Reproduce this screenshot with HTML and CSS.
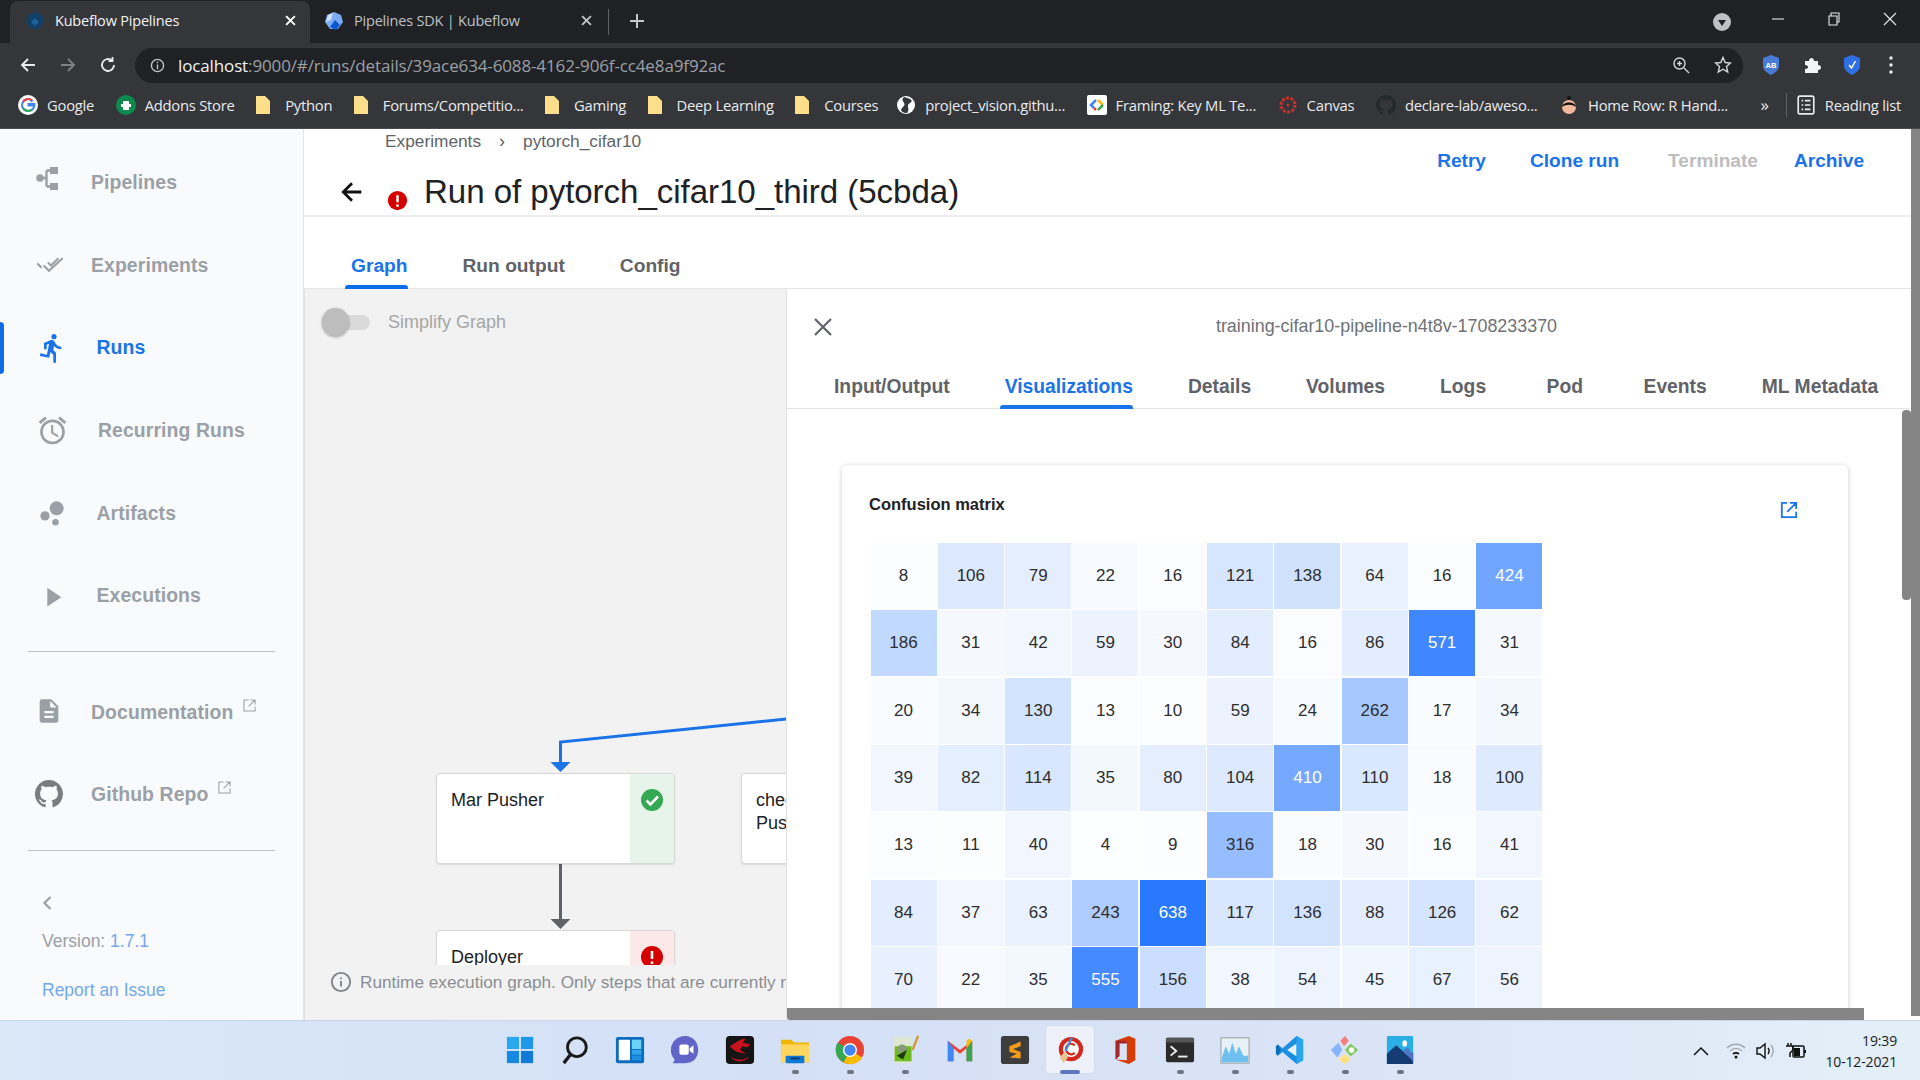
FILE: index.html
```html
<!DOCTYPE html>
<html lang="en">
<head>
<meta charset="utf-8">
<title>Kubeflow Pipelines</title>
<link rel="stylesheet" href="styles.css">
</head>
<body>
<div class="screen">
  <div class="tabstrip">
    <div class="tab active">
      <svg class="fav" viewBox="0 0 20 20"><path d="M10 1 17 4 19 11 14 18 6 18 1 11 3 4Z" fill="#123f66"/><path d="M10 7 14 11 10 15 6 11Z" fill="#1c5f99"/></svg>
      <span class="tab-title">Kubeflow Pipelines</span>
      <svg class="tab-x" viewBox="0 0 10 10"><path d="M1 1 9 9M9 1 1 9"/></svg>
    </div>
    <div class="tab second">
      <svg class="fav" viewBox="0 0 20 20"><path d="M10 1 17 4 19 11 14 18 6 18 1 11 3 4Z" fill="#7baaf7"/><path d="M4 4 9 2 7 9 2 11Z" fill="#cfe0fb"/><path d="M11 9 16 14 12 19 6 16Z" fill="#0b57d0"/></svg>
      <span class="tab-title">Pipelines SDK | Kubeflow</span>
      <svg class="tab-x dim" viewBox="0 0 10 10"><path d="M1 1 9 9M9 1 1 9"/></svg>
    </div>
    <div class="tab-sep"></div>
    <svg class="newtab" viewBox="0 0 16 16"><path d="M8 1V15M1 8H15"/></svg>
    <div class="spacer"></div>
    <svg class="profile" viewBox="0 0 18 18"><circle cx="9" cy="9" r="9" fill="#bdc1c6"/><path d="M5 7H13L9 13Z" fill="#202124"/></svg>
    <svg class="win min" viewBox="0 0 14 14"><path d="M1 7H13"/></svg>
    <svg class="win max" viewBox="0 0 14 14"><path d="M2 4H10V13H2ZM4 4V1H12V10H10"/></svg>
    <svg class="win cls" viewBox="0 0 14 14"><path d="M1 1 13 13M13 1 1 13"/></svg>
  </div>

  <div class="toolbar">
    <svg class="nav" viewBox="0 0 18 18"><path d="M16 9H3M9 3 3 9 9 15"/></svg>
    <svg class="nav off" viewBox="0 0 18 18"><path d="M2 9H15M9 3 15 9 9 15"/></svg>
    <svg class="nav reload" viewBox="0 0 18 18"><path d="M15 9A6 6 0 1 1 13 4.500M13.500 1V5H9.500"/></svg>
    <div class="omnibox">
      <svg class="info" viewBox="0 0 16 16"><circle cx="8" cy="8" r="6.500"/><path d="M8 7V12M8 4V5.500"/></svg>
      <span class="url"><b>localhost</b>:9000/#/runs/details/39ace634-6088-4162-906f-cc4e8a9f92ac</span>
      <svg class="omni-ic zoomic" viewBox="0 0 18 18"><circle cx="7.500" cy="7.500" r="5.500"/><path d="M12 12 17 17M5 7.500H10M7.500 5V10"/></svg>
      <svg class="omni-ic" viewBox="0 0 18 18"><path d="M9 1.500 11.200 6.500 16.500 7 12.500 10.600 13.700 16 9 13.200 4.300 16 5.500 10.600 1.500 7 6.800 6.500Z"/></svg>
    </div>
    <div class="ext-icons">
      <svg class="ext" viewBox="0 0 18 20"><path d="M1 3 9 0 17 3V11C17 15 13 18 9 20 5 18 1 15 1 11Z" fill="#4a7bd4"/><text x="9" y="12.500" class="ab">AB</text></svg>
      <svg class="ext" viewBox="0 0 18 18"><path d="M2 5H6C6 1 11 1 11 5H15V9C19 9 19 14 15 14V17H2V13C6 13 6 9 2 9Z" fill="#f1f3f4"/></svg>
      <svg class="ext" viewBox="0 0 18 20"><path d="M1 3 9 0 17 3V11C17 15 13 18 9 20 5 18 1 15 1 11Z" fill="#2f6fe4"/><path d="M6 10 8.500 13 12.500 6" fill="none" stroke="#fff" stroke-width="1.500"/></svg>
      <svg class="ext dots" viewBox="0 0 4 18"><circle cx="2" cy="2" r="1.700"/><circle cx="2" cy="9" r="1.700"/><circle cx="2" cy="16" r="1.700"/></svg>
    </div>
  </div>

  <div class="bookmarks">
    <span class="bm"><svg class="bi" viewBox="0 0 20 20"><circle cx="10" cy="10" r="10" fill="#fff"/><path d="M15.500 10.500H10.500V9H16.500C16.800 13 14 16 10 16A6 6 0 1 1 14 5.500L12.800 6.800" fill="none" stroke="#4285f4" stroke-width="2"/><path d="M5 7A6 6 0 0 1 14 5.500" fill="none" stroke="#ea4335" stroke-width="2"/><path d="M5 13A6 6 0 0 0 14 14.500" fill="none" stroke="#34a853" stroke-width="2"/></svg>Google</span>
    <span class="bm"><svg class="bi" viewBox="0 0 20 20"><circle cx="10" cy="10" r="10" fill="#0f8a4f"/><path d="M7 6H13V9H15V12H13V15H7V12H5V9H7Z" fill="#fff"/></svg>Addons Store</span>
    <span class="bm"><svg class="fold" viewBox="0 0 14 18"><path d="M0 0H9L14 5V18H0Z"/></svg>Python</span>
    <span class="bm"><svg class="fold" viewBox="0 0 14 18"><path d="M0 0H9L14 5V18H0Z"/></svg>Forums/Competitio...</span>
    <span class="bm"><svg class="fold" viewBox="0 0 14 18"><path d="M0 0H9L14 5V18H0Z"/></svg>Gaming</span>
    <span class="bm"><svg class="fold" viewBox="0 0 14 18"><path d="M0 0H9L14 5V18H0Z"/></svg>Deep Learning</span>
    <span class="bm tight"><svg class="fold" viewBox="0 0 14 18"><path d="M0 0H9L14 5V18H0Z"/></svg>Courses</span>
    <span class="bm"><svg class="bi" viewBox="0 0 20 20"><circle cx="10" cy="10" r="9" fill="#fff"/><path d="M8 2C3 6 12 8 7 12S8 18 11 18C15 13 9 11 14 8S12 3 8 2Z" fill="#35363a"/></svg>project_vision.githu...</span>
    <span class="bm"><svg class="bi" viewBox="0 0 20 20"><rect width="20" height="20" rx="2" fill="#fff"/><path d="M9 5 4 10 7 13" fill="none" stroke="#4285f4" stroke-width="2.500"/><path d="M11 5 16 10" fill="none" stroke="#fbbc04" stroke-width="2.500"/><path d="M16 10 11 15" fill="none" stroke="#34a853" stroke-width="2.500"/><path d="M7 13 9 15" fill="none" stroke="#ea4335" stroke-width="2.500"/></svg>Framing: Key ML Te...</span>
    <span class="bm"><svg class="bi" viewBox="0 0 20 20"><circle cx="10" cy="10" r="7" fill="none" stroke="#c8322a" stroke-width="3" stroke-dasharray="3 1.400"/><circle cx="10" cy="10" r="1.500" fill="#c8322a"/></svg>Canvas</span>
    <span class="bm"><svg class="bi" viewBox="0 0 16 16"><path class="gh-dark" d="M8 0C3.580 0 0 3.580 0 8c0 3.540 2.290 6.530 5.470 7.590.4.070.55-.170.550-.380 0-.190-.010-.820-.010-1.490-2.010.370-2.530-.490-2.690-.940-.090-.230-.480-.940-.820-1.130-.280-.150-.680-.520-.010-.530.630-.010 1.080.580 1.230.820.720 1.210 1.870.870 2.330.660.070-.520.280-.870.510-1.070-1.780-.200-3.640-.890-3.640-3.950 0-.870.310-1.590.820-2.150-.080-.200-.360-1.020.080-2.120 0 0 .670-.210 2.200.820.640-.180 1.320-.270 2-.270s1.360.090 2 .270c1.530-1.040 2.200-.820 2.200-.820.440 1.100.160 1.920.080 2.120.510.560.820 1.270.820 2.150 0 3.070-1.870 3.750-3.650 3.950.290.250.540.730.540 1.480 0 1.070-.010 1.930-.010 2.200 0 .210.150.460.550.380A8.010 8.010 0 0 0 16 8c0-4.420-3.580-8-8-8Z"/></svg>declare-lab/aweso...</span>
    <span class="bm"><svg class="bi" viewBox="0 0 20 20"><circle cx="10" cy="12" r="7" fill="#f2b89b"/><path d="M3 12C3 6 17 6 17 12 13 9 7 9 3 12ZM8 3A2 2 0 1 1 12 3 2 2 0 1 1 8 3Z" fill="#111"/></svg>Home Row: R Hand...</span>
    <span class="spacer"></span>
    <span class="more">»</span>
    <span class="bm-sep"></span>
    <span class="bm last"><svg class="bi" viewBox="0 0 16 18"><rect x="1" y="1" width="14" height="16" rx="1.500" fill="none" stroke="#e8eaed" stroke-width="1.500"/><path d="M4 5H5.500M7 5H12M4 9H5.500M7 9H12M4 13H5.500M7 13H12" stroke="#e8eaed" stroke-width="1.500"/></svg>Reading list</span>
  </div>

  <div class="app">
    <aside class="sidebar">
      <nav class="nav-main">
        <a class="nav-item"><svg class="nav-ic ic-pipe" viewBox="0 0 22 23"><circle cx="4" cy="11" r="3.800"/><rect x="14" y="0" width="8" height="7"/><rect x="14" y="16" width="8" height="7"/><path class="pipe-line" d="M4 11H10.500M10.500 3.500V19.500M10.500 3.500H15M10.500 19.500H15"/></svg><span>Pipelines</span></a>
        <a class="nav-item"><svg class="nav-ic ic-exp" viewBox="0 0 26 18"><path class="tick" d="M1 8 5 12M7 10 12 15 25 3M11 7 14 10 21 3"/></svg><span>Experiments</span></a>
        <a class="nav-item current shift"><svg class="nav-ic ic-run" viewBox="0 0 24 24"><path d="M13.490 5.480c1.100 0 2-.900 2-2s-.900-2-2-2-2 .900-2 2 .900 2 2 2zm-3.600 13.900 1-4.400 2.100 2v6h2v-7.500l-2.100-2 .600-3c1.300 1.500 3.300 2.500 5.500 2.500v-2c-1.900 0-3.500-1-4.300-2.400l-1-1.600c-.400-.600-1-1-1.700-1-.300 0-.500.100-.800.100l-5.200 2.200v4.700h2v-3.400l1.800-.700-1.600 8.100-4.900-1-.400 2 7 1.400z"/></svg><span>Runs</span></a>
        <a class="nav-item shift"><svg class="nav-ic ic-alarm" viewBox="0 0 24 24"><path d="M22 5.720l-4.600-3.860-1.290 1.530 4.600 3.860L22 5.720zM7.880 3.390 6.600 1.860 2 5.710l1.290 1.530 4.590-3.850zM12.500 8H11v6l4.750 2.850.750-1.230-4-2.370V8zM12 4c-4.970 0-9 4.030-9 9s4.030 9 9 9 9-4.030 9-9-4.030-9-9-9zm0 16c-3.870 0-7-3.130-7-7s3.130-7 7-7 7 3.130 7 7-3.130 7-7 7z"/></svg><span>Recurring Runs</span></a>
        <a class="nav-item shift"><svg class="nav-ic" viewBox="0 0 24 24"><circle cx="16" cy="8" r="6"/><circle cx="6" cy="14.500" r="4"/><circle cx="15" cy="20" r="2.800"/></svg><span>Artifacts</span></a>
        <a class="nav-item shift"><svg class="nav-ic" viewBox="0 0 24 24"><path d="M8 5 20 13 8 21Z"/></svg><span>Executions</span></a>
      </nav>
      <div class="rule"></div>
      <nav class="nav-ext">
        <a class="nav-item"><svg class="nav-ic ic-doc" viewBox="0 0 24 24"><path d="M14 2H6C4.900 2 4 2.900 4 4V20C4 21.100 4.900 22 6 22H18C19.100 22 20 21.100 20 20V8ZM16 18H8V16H16ZM16 14H8V12H16ZM13 9V3.500L18.500 9Z"/></svg><span>Documentation</span><svg class="ext-link" viewBox="0 0 14 14"><path d="M6 1H1V13H13V8M8 1H13V6M13 1 6 8"/></svg></a>
        <a class="nav-item"><svg class="nav-ic gh" viewBox="0 0 16 16"><path d="M8 0C3.580 0 0 3.580 0 8c0 3.540 2.290 6.530 5.470 7.590.4.070.55-.170.550-.380 0-.190-.010-.820-.010-1.490-2.010.370-2.530-.490-2.690-.940-.090-.230-.480-.940-.820-1.130-.280-.150-.680-.520-.010-.530.630-.010 1.080.580 1.230.820.720 1.210 1.870.870 2.330.660.070-.520.280-.870.510-1.070-1.780-.200-3.640-.890-3.640-3.950 0-.870.310-1.590.820-2.150-.080-.200-.360-1.020.080-2.120 0 0 .670-.210 2.200.820.640-.180 1.320-.270 2-.270s1.360.090 2 .270c1.530-1.040 2.200-.820 2.200-.820.440 1.100.160 1.920.080 2.120.510.560.820 1.270.820 2.150 0 3.070-1.870 3.750-3.650 3.950.290.250.540.730.540 1.480 0 1.070-.010 1.930-.010 2.200 0 .210.150.460.550.380A8.010 8.010 0 0 0 16 8c0-4.420-3.580-8-8-8Z"/></svg><span>Github Repo</span><svg class="ext-link" viewBox="0 0 14 14"><path d="M6 1H1V13H13V8M8 1H13V6M13 1 6 8"/></svg></a>
      </nav>
      <div class="rule second-rule"></div>
      <svg class="collapse" viewBox="0 0 10 16"><path d="M8.500 2 2.500 8 8.500 14"/></svg>
      <div class="version">Version: <a>1.7.1</a></div>
      <a class="report">Report an Issue</a>
    </aside>

    <main class="content">
      <header class="page-head">
        <div class="head-left">
          <div class="crumbs"><span>Experiments</span><span class="crumb-sep">›</span><span>pytorch_cifar10</span></div>
          <div class="title-row">
            <svg class="back" viewBox="0 0 24 24"><path d="M20 12H5M12 4.500 4.500 12 12 19.500"/></svg>
            <svg class="err" viewBox="0 0 24 24"><circle cx="12" cy="12" r="11"/><path d="M12 6V14M12 16.500V19"/></svg>
            <h1>Run of pytorch_cifar10_third (5cbda)</h1>
          </div>
        </div>
        <div class="actions"><a>Retry</a><a>Clone run</a><a class="off">Terminate</a><a>Archive</a></div>
      </header>
      <div class="page-tabs"><a class="sel">Graph</a><a>Run output</a><a>Config</a></div>
      <div class="work">
        <section class="graph">
          <div class="switch-row"><span class="switch"><i></i></span><span>Simplify Graph</span></div>
          <svg class="edges" viewBox="0 0 482 725"><path class="e-blue" d="M482 430 255.500 453V476"/><path class="f-blue" d="M245.500 473H265.500L255.500 483Z"/><path class="e-gray" d="M255.500 575V632"/><path class="f-gray" d="M245.500 630H265.500L255.500 640Z"/></svg>
          <div class="node n-mar"><span class="node-name">Mar Pusher</span><span class="node-status ok"><svg viewBox="0 0 24 24"><circle cx="12" cy="12" r="11" fill="#34a853"/><path d="M6.500 12.500 10.500 16.500 18 8.500" fill="none" stroke="#fff" stroke-width="2.600"/></svg></span></div>
          <div class="node n-che"><span class="node-name">checkpoint<br>Pusher</span></div>
          <div class="node n-dep"><span class="node-name">Deployer</span><span class="node-status bad"><svg viewBox="0 0 24 24"><circle cx="12" cy="12" r="11" fill="#d50000"/><path d="M12 6V14M12 16.500V19" fill="none" stroke="#fff" stroke-width="2.600"/></svg></span></div>
          <div class="graph-note"><svg viewBox="0 0 24 24"><circle cx="12" cy="12" r="10"/><path d="M12 11V17M12 7V9"/></svg><span>Runtime execution graph. Only steps that are currently running or have already completed are shown.</span></div>
        </section>
        <section class="panel">
          <div class="panel-top">
            <svg class="close" viewBox="0 0 20 20"><path d="M2 2 18 18M18 2 2 18"/></svg>
            <div class="panel-title">training-cifar10-pipeline-n4t8v-1708233370</div>
          </div>
          <div class="panel-tabs"><a>Input/Output</a><a class="sel">Visualizations</a><a>Details</a><a>Volumes</a><a>Logs</a><a class="wide">Pod</a><a class="wide">Events</a><a>ML Metadata</a></div>
          <div class="panel-body">
            <div class="card">
              <div class="card-head"><h2>Confusion matrix</h2><svg class="popout" viewBox="0 0 20 20"><path d="M8 2H2V18H18V12M11 2H18V9M18 2 8 12"/></svg></div>
              <div class="matrix">
                <div class="c" style="--v:.0125">8</div><div class="c" style="--v:.166">106</div><div class="c" style="--v:.124">79</div><div class="c" style="--v:.034">22</div><div class="c" style="--v:.025">16</div><div class="c" style="--v:.19">121</div><div class="c" style="--v:.216">138</div><div class="c" style="--v:.1">64</div><div class="c" style="--v:.025">16</div><div class="c w" style="--v:.665">424</div>
                <div class="c" style="--v:.292">186</div><div class="c" style="--v:.049">31</div><div class="c" style="--v:.066">42</div><div class="c" style="--v:.092">59</div><div class="c" style="--v:.047">30</div><div class="c" style="--v:.132">84</div><div class="c" style="--v:.025">16</div><div class="c" style="--v:.135">86</div><div class="c w" style="--v:.895">571</div><div class="c" style="--v:.049">31</div>
                <div class="c" style="--v:.031">20</div><div class="c" style="--v:.053">34</div><div class="c" style="--v:.204">130</div><div class="c" style="--v:.02">13</div><div class="c" style="--v:.016">10</div><div class="c" style="--v:.092">59</div><div class="c" style="--v:.038">24</div><div class="c" style="--v:.411">262</div><div class="c" style="--v:.027">17</div><div class="c" style="--v:.053">34</div>
                <div class="c" style="--v:.061">39</div><div class="c" style="--v:.129">82</div><div class="c" style="--v:.179">114</div><div class="c" style="--v:.055">35</div><div class="c" style="--v:.125">80</div><div class="c" style="--v:.163">104</div><div class="c w" style="--v:.643">410</div><div class="c" style="--v:.172">110</div><div class="c" style="--v:.028">18</div><div class="c" style="--v:.157">100</div>
                <div class="c" style="--v:.02">13</div><div class="c" style="--v:.017">11</div><div class="c" style="--v:.063">40</div><div class="c" style="--v:.006">4</div><div class="c" style="--v:.014">9</div><div class="c" style="--v:.495">316</div><div class="c" style="--v:.028">18</div><div class="c" style="--v:.047">30</div><div class="c" style="--v:.025">16</div><div class="c" style="--v:.064">41</div>
                <div class="c" style="--v:.132">84</div><div class="c" style="--v:.058">37</div><div class="c" style="--v:.099">63</div><div class="c" style="--v:.381">243</div><div class="c w" style="--v:1">638</div><div class="c" style="--v:.183">117</div><div class="c" style="--v:.213">136</div><div class="c" style="--v:.138">88</div><div class="c" style="--v:.197">126</div><div class="c" style="--v:.097">62</div>
                <div class="c" style="--v:.11">70</div><div class="c" style="--v:.034">22</div><div class="c" style="--v:.055">35</div><div class="c w" style="--v:.87">555</div><div class="c" style="--v:.245">156</div><div class="c" style="--v:.06">38</div><div class="c" style="--v:.085">54</div><div class="c" style="--v:.071">45</div><div class="c" style="--v:.105">67</div><div class="c" style="--v:.088">56</div>
              </div>
            </div>
          </div>
          <div class="thumb-v"></div>
          <div class="thumb-h"></div>
        </section>
      </div>
    </main>
    <div class="page-scroll"></div>
  </div>

  <footer class="taskbar">
    <div class="task-icons">
      <span class="ti"><svg viewBox="0 0 32 32"><path fill="#29a8ee" d="M2 2H15V15H2Z"/><path fill="#1e97e8" d="M17 2H30V15H17Z"/><path fill="#1689e0" d="M2 17H15V30H2Z"/><path fill="#0f7bd6" d="M17 17H30V30H17Z"/></svg></span>
      <span class="ti"><svg viewBox="0 0 32 32"><circle cx="18" cy="13" r="10" fill="none" stroke="#1a1a1a" stroke-width="3"/><path d="M11 21 4 30" stroke="#1a1a1a" stroke-width="3.500"/></svg></span>
      <span class="ti"><svg viewBox="0 0 32 32"><rect x="1" y="2" width="30" height="28" rx="2" fill="#0f6cbd"/><rect x="4" y="5" width="12" height="22" rx="1" fill="#fff"/><rect x="18" y="5" width="10" height="10" fill="#69d2f7"/><rect x="18" y="16" width="10" height="5" fill="#2fa6ee"/><rect x="18" y="22" width="10" height="5" fill="#1c8fe6"/></svg></span>
      <span class="ti"><svg viewBox="0 0 32 32"><path d="M16 1C25 1 30 8 30 16S25 30 16 30H3L5 26C2 23 1 20 1 16 1 8 7 1 16 1Z" fill="#6264c7"/><rect x="10" y="10" width="10" height="11" rx="2" fill="#fff"/><path d="M21 14 25 11V20L21 17Z" fill="#fff"/></svg></span>
      <span class="ti"><svg viewBox="0 0 32 32"><rect x="1" y="1" width="30" height="30" rx="4" fill="#151515"/><path d="M5 12C11 9 15 4 22 4L19 8 27 10 24 13 18 12 16 16 23 20 13 18C9 16 7 14 5 12ZM6 23C13 28 20 27 26 23 20 30 11 30 6 23Z" fill="#c8121d"/></svg></span>
      <span class="ti dot"><svg viewBox="0 0 32 32"><path d="M1 5H12L15 8H31V29H1Z" fill="#f2b705"/><path d="M1 10H31V29H1Z" fill="#ffd75e"/><rect x="6" y="22" width="20" height="8" rx="1" fill="#0f78d4"/><rect x="11" y="24" width="10" height="2" fill="#0b3d70"/></svg></span>
      <span class="ti dot"><svg viewBox="0 0 32 32"><circle cx="16" cy="16" r="15" fill="#ea4335"/><path d="M16 16 29 24A15 15 0 0 1 9 29.300Z" fill="#fbbc04"/><path d="M16 16 9 29.300A15 15 0 0 1 3 8Z" fill="#34a853"/><circle cx="16" cy="16" r="7.500" fill="#fff"/><circle cx="16" cy="16" r="6" fill="#4285f4"/></svg></span>
      <span class="ti dot"><svg viewBox="0 0 32 32"><path d="M4 2H23V30H6L4 28Z" fill="#dfe6d2"/><rect x="5" y="12" width="18" height="16" fill="#6bbd1e"/><circle cx="13" cy="15" r="5" fill="#8a9a78"/><path d="M7 22 18 16 14 26Z" fill="#1d3b10"/><path d="M24 16 30 1" stroke="#d39a2e" stroke-width="2.500"/></svg></span>
      <span class="ti"><svg viewBox="0 0 32 32"><path d="M3 6 16 16 29 6V28H23V14L16 20 9 14V28H3Z" fill="#ea4335"/><path d="M3 6V28H9V14L3 6Z" fill="#4285f4"/><path d="M29 6V28H23V14L29 6Z" fill="#34a853"/><path d="M23 14 29 6 26 4 23 6Z" fill="#fbbc04"/></svg></span>
      <span class="ti"><svg viewBox="0 0 32 32"><rect x="1" y="1" width="30" height="30" rx="3" fill="#3d3d3d"/><path d="M22 7 10 12V18L18 20 10 24 22 25V18L14 15 22 12Z" fill="#f49b1a"/></svg></span>
      <span class="ti running"><svg viewBox="0 0 32 32"><circle cx="17" cy="15" r="13" fill="#d3281f"/><circle cx="17" cy="15" r="8.500" fill="#fff"/><path d="M21 11A5.500 5.500 0 1 0 21 19" fill="none" stroke="#d3281f" stroke-width="2.500"/><path d="M18 3 11 17" stroke="#3f8fd6" stroke-width="2.500"/><path d="M5 24 11 17 14 24 9 30Z" fill="#e9c48e"/></svg></span>
      <span class="ti"><svg viewBox="0 0 32 32"><path d="M6 6 20 1 27 4V27L20 31 6 26 18 27V6L10 9V22L6 26Z" fill="#d83b01"/><path d="M6 6 18 6V9L10 9V22L6 26Z" fill="#a4262c"/></svg></span>
      <span class="ti dot"><svg viewBox="0 0 32 32"><rect x="1" y="3" width="30" height="26" rx="2" fill="#2b2b2b"/><rect x="1" y="3" width="30" height="5" fill="#555"/><path d="M6 12 12 17 6 22" fill="none" stroke="#eee" stroke-width="2"/><path d="M14 23H24" stroke="#eee" stroke-width="2"/></svg></span>
      <span class="ti dot"><svg viewBox="0 0 32 32"><rect x="1" y="3" width="30" height="27" fill="#e8f1f8" stroke="#999"/><path d="M2 24 6 12 10 20 13 8 17 20 20 12 25 22 30 22V29H2Z" fill="#6fc0ee"/></svg></span>
      <span class="ti dot"><svg viewBox="0 0 32 32"><path d="M23 1 30 5V27L23 31 8 18 3 22 1 20V12L3 10 8 14Z" fill="#1d8fe0"/><path d="M23 9V23L13 16Z" fill="#e8eff8"/><path d="M23 1 30 5V27L23 31Z" fill="#2aa6f0"/><path d="M3 10 1 12V20L3 22 6 16Z" fill="#0b6fb8"/></svg></span>
      <span class="ti dot"><svg viewBox="0 0 32 32"><path d="M9 8 1 16 8 24 13 16Z" fill="#86b4ff"/><path d="M16 1 11 6 15 12 20 6Z" fill="#f47f7f"/><path d="M22 9 16 16 22 23 30 16Z" fill="#7cc95a"/><circle cx="23" cy="16" r="3" fill="#fff"/><path d="M16 20 9 26 16 31 22 26Z" fill="#ffe082"/></svg></span>
      <span class="ti dot"><svg viewBox="0 0 32 32"><rect x="2" y="1" width="28" height="30" rx="1" fill="#29aee6"/><path d="M2 31V20L12 11 23 21 30 19V31Z" fill="#143c73"/><path d="M19 17 24 13 30 21V28Z" fill="#4e76c2"/><ellipse cx="21" cy="9" rx="2.500" ry="3.500" fill="#fff"/></svg></span>
    </div>
    <div class="tray">
      <svg class="caret" viewBox="0 0 16 10"><path d="M1 9 8 2 15 9"/></svg>
      <svg class="tr-ic" viewBox="0 0 20 18"><path class="wifi-off" d="M1 6C6 1 14 1 19 6M4 9C8 5.500 12 5.500 16 9"/><path class="wifi-on" d="M7 12C9 10.500 11 10.500 13 12"/><circle cx="10" cy="15" r="1.500" fill="#111"/></svg>
      <svg class="tr-ic" viewBox="0 0 20 18"><path class="spk" d="M1 6H4L9 2V16L4 12H1Z"/><path class="spk" d="M12 6C13.500 8 13.500 10 12 12"/><path class="wifi-off" d="M15 3C18 7 18 11 15 15"/></svg>
      <svg class="tr-ic" viewBox="0 0 22 18"><path d="M3 1V4M6 1V4M1 4H8V8L5 11V15" fill="none" stroke="#111" stroke-width="1.500"/><rect x="8" y="4" width="11" height="11" rx="1" fill="none" stroke="#111" stroke-width="1.500"/><rect x="9" y="6" width="6" height="8" fill="#111"/><rect x="19" y="8" width="2" height="3" fill="#111"/></svg>
      <div class="clock"><span>19:39</span><span>10-12-2021</span></div>
    </div>
  </footer>
</div>
</body>
</html>
```

FILE: styles.css
```css
* { box-sizing: border-box; }
html, body { margin: 0; height: 100%; overflow: hidden; }
body { font-family: "Liberation Sans", Arial, sans-serif; }
a { color: inherit; text-decoration: none; }
svg { display: block; flex: none; }
.spacer { flex: 1; }
.screen { width: 1920px; height: 1080px; display: flex; flex-direction: column; overflow: hidden; }

/* Browser chrome */
.tabstrip { height: 43px; background: #202124; display: flex; align-items: flex-end; padding-left: 10px; flex: none; }
.tab { height: 42px; width: 300px; display: flex; align-items: center; padding: 0 14px 3px 15px; color: #e8eaed; border-radius: 8px 8px 0 0; }
.tab.active { background: #35363a; color: #f1f3f4; }
.tab.second { width: 296px; padding-left: 14px; color: #bdc1c6; }
.fav { width: 20px; height: 20px; margin-right: 10px; }
.tab-title { flex: 1; font-family: "Open Sans", sans-serif; font-size: 14.500px; letter-spacing: -.2px; white-space: nowrap; overflow: hidden; }
.tab-x { width: 11px; height: 11px; fill: none; stroke: #fff; stroke-width: 1.800; }
.tab-x.dim { stroke: #bdc1c6; }
.tab-sep { width: 1px; height: 26px; background: #5f6368; margin: 0 0 8px 2px; }
.newtab { width: 16px; height: 16px; margin: 0 0 14px 20px; fill: none; stroke: #c4c7ca; stroke-width: 2; }
.profile { width: 18px; height: 18px; margin: 0 0 12px; }
.win { width: 14px; height: 14px; margin: 0 0 17px 42px; fill: none; stroke: #e8eaed; stroke-width: 1.100; }
.win.min { margin-left: 40px; }
.win.cls { margin: 0 23px 17px 42px; }

.toolbar { height: 44px; background: #35363a; display: flex; align-items: center; padding: 0 0 0 19px; flex: none; }
.nav { width: 18px; height: 18px; margin-right: 22px; fill: none; stroke: #e8eaed; stroke-width: 1.900; }
.nav.off { stroke: #7d8084; }
.nav.reload { margin-right: 18px; }
.omnibox { width: 1608px; height: 35px; background: #202124; border-radius: 18px; display: flex; align-items: center; padding: 0 11px 0 15px; }
.info { width: 15px; height: 15px; fill: none; stroke: #bdc1c6; stroke-width: 1.500; margin-right: 13px; }
.url { flex: 1; color: #9aa0a6; font-family: "Open Sans", sans-serif; font-size: 17px; letter-spacing: -.13px; white-space: nowrap; }
.url b { font-weight: 400; color: #f1f3f4; }
.omni-ic { width: 18px; height: 18px; fill: none; stroke: #d5d7da; stroke-width: 1.400; }
.zoomic { margin-right: 24px; }
.ext-icons { display: flex; align-items: center; gap: 22.500px; margin-left: 19px; }
.ext { width: 18px; height: 20px; }
.ab { fill: #fff; font-size: 7.500px; font-weight: 700; text-anchor: middle; }
.dots { width: 4px; height: 18px; fill: #e8eaed; margin-left: 5.500px; }

.bookmarks { height: 42px; background: #35363a; display: flex; align-items: center; padding: 0 19px 6px 18px; border-bottom: 1px solid #4a4b4f; flex: none; color: #e8eaed; font-family: "Open Sans", sans-serif; font-size: 14.800px; letter-spacing: -.25px; white-space: nowrap; }
.bm { display: flex; align-items: center; margin-right: 21.500px; }
.bm.tight { margin-right: 18px; }
.bm.last { margin: 0; }
.bi { width: 20px; height: 20px; margin-right: 9px; }
.fold { width: 14px; height: 18px; margin-right: 15px; fill: #fdde8a; }
.gh-dark { fill: #24292e; }
.more { color: #e8eaed; font-size: 17px; margin-right: 17px; }
.bm-sep { width: 1px; height: 24px; background: #5f6368; margin-right: 9px; }

/* KFP app */
.app { flex: 1; min-height: 0; display: flex; position: relative; background: #fff; }
.sidebar { width: 304px; flex: none; background: #f8fafb; border-right: 1px solid #e4e5e7; padding-top: 12.500px; display: flex; flex-direction: column; color: #9aa0a6; }
.nav-main { display: flex; flex-direction: column; }
.nav-item { height: 82.600px; display: flex; align-items: center; padding-left: 34px; font-size: 19.400px; font-weight: 700; letter-spacing: .1px; color: #9aa0a6; position: relative; }
.nav-ic { width: 28px; height: 28px; fill: #9aa0a6; margin-right: 29px; }
.ic-pipe { width: 22px; height: 23px; margin: -9px 33px 0 2px; }
.pipe-line { fill: none; stroke: #9aa0a6; stroke-width: 2.400; }
.ic-exp { width: 28px; height: 19px; margin: -2px 27px 0 2px; }
.nav-item.shift { padding-left: 38px; }
.nav-item.shift .nav-ic { margin-right: 30.500px; }
.nav-item.shift .ic-run { width: 32px; height: 32px; margin: 0 28.500px 0 -2px; }
.nav-item.shift .ic-alarm { width: 33px; height: 33px; margin: 0 29px 0 -2px; }
.tick { fill: none; stroke: #9aa0a6; stroke-width: 2; }
.nav-item.current { color: #1a73e8; }
.nav-item.current .nav-ic { fill: #1a73e8; }
.nav-item.current::before { content: ""; position: absolute; left: 0; top: 15px; width: 4px; height: 52px; background: #0d6de8; border-radius: 0 4px 4px 0; }
.rule { height: 1px; background: #bdc1c6; margin: 13.500px 28px 0 28px; flex: none; }
.nav-ext { margin-top: 20px; display: flex; flex-direction: column; }
.nav-ext .nav-item { height: 82px; }
.nav-ext .nav-ic { margin: -2px 28px 0 1px; }
.nav-ext .ic-doc { margin-top: -4px; }
.gh { fill: #7a7c80; }
.ext-link { width: 13px; height: 13px; margin: -14px 0 0 10px; fill: none; stroke: #9aa0a6; stroke-width: 1.100; }
.second-rule { margin-top: 14px; }
.collapse { width: 10px; height: 16px; margin: 44px 0 0 42px; fill: none; stroke: #9aa0a6; stroke-width: 2.200; }
.version { margin: 20px 0 0 42px; font-size: 17.500px; color: #9aa0a6; }
.version a, .report { color: #74a9e9; }
.report { margin: 28px 0 0 42px; font-size: 17.500px; }

.content { flex: 1; min-width: 0; display: flex; flex-direction: column; }
.page-head { height: 88px; flex: none; display: flex; justify-content: space-between; border-bottom: 2px solid #eeeeee; }
.head-left { padding-left: 34px; }
.crumbs { display: flex; gap: 18px; color: #5f6368; font-size: 17.300px; margin: 2.500px 0 0 47px; line-height: 19px; }
.crumb-sep { font-size: 18px; }
.title-row { display: flex; align-items: center; height: 44px; margin-top: 19.500px; }
.back { width: 28px; height: 28px; fill: none; stroke: #111; stroke-width: 2.400; }
.err { width: 21px; height: 21px; margin: 17px 0 0 21px; fill: #d50000; stroke: #fff; stroke-width: 0; }
.err path { fill: none; stroke: #fff; stroke-width: 2.800; }
.title-row h1 { margin: 0 0 0 16px; font-weight: 400; font-size: 33.100px; color: #202124; white-space: nowrap; letter-spacing: -.05px; }
.actions { display: flex; gap: 44px; padding: 21px 56px 0 0; font-size: 19.100px; font-weight: 700; color: #1a73e8; line-height: 22px; }
.actions .off { color: #bdbdbd; margin: 0 -8px 0 5px; }

.page-tabs { height: 72px; flex: none; display: flex; gap: 55px; padding: 38px 0 0 47px; border-bottom: 1px solid #e5e5e5; font-size: 19.200px; font-weight: 700; color: #5f6368; line-height: 22px; }
.page-tabs a { position: relative; }
.page-tabs .sel { color: #1a73e8; }
.page-tabs .sel::after { content: ""; position: absolute; left: -6px; right: 0; bottom: -1px; height: 4px; background: #0d6de8; border-radius: 3px 3px 0 0; }

.work { flex: 1; min-height: 0; display: flex; }
.graph { width: 482px; flex: none; background: #f2f2f2; position: relative; overflow: hidden; border-left: 1px solid #e2e2e2; }
.switch-row { display: flex; align-items: center; gap: 18px; padding: 21px 0 0 17px; color: #a6a6a6; font-size: 18px; line-height: 24px; }
.switch { width: 48px; height: 20px; position: relative; display: block; }
.switch::before { content: ""; position: absolute; left: 5px; right: 0; top: 3px; height: 15px; border-radius: 8px; background: #dadada; }
.switch i { position: absolute; left: 0; top: -4px; width: 27px; height: 28px; border-radius: 50%; background: #bdbdbd; box-shadow: 0 1px 3px rgba(0,0,0,.35); }
.edges { position: absolute; left: 0; top: 0; width: 482px; height: 725px; }
.e-blue { fill: none; stroke: #1a73e8; stroke-width: 3; }
.f-blue { fill: #1a73e8; }
.e-gray { fill: none; stroke: #5f6368; stroke-width: 3; }
.f-gray { fill: #5f6368; }
.node { position: absolute; width: 239px; height: 91px; background: #fff; border: 1px solid #d8d8d8; border-radius: 4px; box-shadow: 0 1px 2px rgba(0,0,0,.1); display: flex; overflow: hidden; font-size: 18px; color: #202124; line-height: 23px; }
.node-name { flex: 1; padding: 15px 0 0 14px; white-space: nowrap; }
.node-status { width: 44px; display: flex; justify-content: center; align-items: flex-start; padding-top: 14px; }
.node-status svg { width: 24px; height: 24px; }
.node-status.ok { background: #e6f4ea; }
.node-status.bad { background: #fce8e6; }
.n-mar { left: 131px; top: 484px; }
.n-che { left: 436px; top: 484px; }
.n-dep { left: 131px; top: 641px; }
.graph-note { position: absolute; left: 0; right: 0; bottom: 0; height: 55px; background: #f2f2f2; display: flex; align-items: flex-start; gap: 8.500px; padding: 6px 0 0 24.500px; color: #8a8e93; font-size: 17.200px; line-height: 22px; white-space: nowrap; }
.graph-note svg { width: 22px; height: 22px; fill: none; stroke: #7f8388; stroke-width: 2; }

.panel { flex: 1; min-width: 0; position: relative; background: #fff; border-left: 1px solid #e2e2e2; overflow: hidden; display: flex; flex-direction: column; }
.panel-top { height: 75px; flex: none; display: flex; align-items: center; padding-left: 26px; }
.close { width: 20px; height: 20px; fill: none; stroke: #5f6368; stroke-width: 2.200; }
.panel-title { flex: 1; text-align: center; padding-left: 20px; color: #6e7175; font-size: 17.900px; }
.panel-tabs { height: 45px; flex: none; display: flex; padding: 11px 0 0 47px; gap: 55px; border-bottom: 1px solid #e5e5e5; font-size: 19.300px; font-weight: 700; color: #5f6368; line-height: 24px; white-space: nowrap; }
.panel-tabs a { position: relative; }
.panel-tabs .wide { margin-left: 5.500px; }
.panel-tabs .sel { color: #1a73e8; }
.panel-tabs .sel::after { content: ""; position: absolute; left: -5px; right: 0; bottom: -1px; height: 4px; background: #1a73e8; border-radius: 3px 3px 0 0; }
.panel-body { flex: 1; min-height: 0; padding: 56px 0 0 55px; overflow: hidden; }
.card { width: 1006px; background: #fff; border-radius: 5px; box-shadow: 0 1px 5px rgba(0,0,0,.22); padding: 29px 28px 40px 27px; }
.card-head { display: flex; justify-content: space-between; height: 49px; }
.card-head h2 { margin: 0; font-size: 16.500px; font-weight: 700; color: #202124; line-height: 20px; }
.popout { width: 18px; height: 18px; margin: 7px 22px 0 0; fill: none; stroke: #1a73e8; stroke-width: 2; }
.matrix { display: grid; grid-template-columns: repeat(10, 66px); grid-auto-rows: 66px; gap: 1.340px; margin-left: 1.500px; }
.c { display: flex; align-items: center; justify-content: center; font-size: 17px; color: #2e2e2e; background: rgba(41, 121, 255, var(--v)); }
.c.w { color: #fff; }
.thumb-v { position: absolute; right: 9px; top: 121px; width: 9px; height: 190px; border-radius: 4px; background: #858585; }
.thumb-h { position: absolute; left: 0; right: 56px; bottom: 0; height: 12px; background: #858585; border-radius: 0 0 0 3px; }
.page-scroll { position: absolute; right: 0; top: 0; bottom: 4px; width: 9px; background: #858585; }

/* Taskbar */
.taskbar { height: 60px; flex: none; display: flex; justify-content: flex-end; padding-right: 23px; position: relative; background: linear-gradient(90deg, #dbe8f8 0%, #d3e0f6 40%, #dbe4f6 70%, #e3eff8 100%); border-top: 1px solid #c9d6ea; }
.task-icons { position: absolute; left: 492.500px; top: 0; display: flex; height: 100%; }
.ti { width: 55px; height: 47px; margin-top: 5px; display: flex; align-items: center; justify-content: center; position: relative; border-radius: 4px; }
.ti svg { width: 30px; height: 30px; }
.ti.dot::after, .ti.running::after { content: ""; position: absolute; bottom: -1px; left: 50%; margin-left: -3px; width: 7px; height: 4px; border-radius: 2px; background: #6c7482; }
.ti.running { width: 48px; margin: 5px 3.500px 0; background: #eef1fa; box-shadow: 0 0 2px rgba(0,0,0,.08); }
.ti.running::after { width: 20px; margin-left: -10px; background: #5f77bf; }
.tray { display: flex; align-items: center; }
.caret { width: 16px; height: 10px; margin-right: 16px; fill: none; stroke: #111; stroke-width: 1.500; }
.tr-ic { width: 22px; height: 18px; margin-right: 8px; }
.wifi-off { fill: none; stroke: #9fa6ad; stroke-width: 1.300; }
.wifi-on { fill: none; stroke: #111; stroke-width: 1.800; }
.spk { fill: none; stroke: #111; stroke-width: 1.400; }
.clock { display: flex; flex-direction: column; align-items: flex-end; margin-left: 10px; font-family: "Open Sans", sans-serif; font-size: 14px; color: #1b1b1b; line-height: 21px; letter-spacing: -.15px; }
```
